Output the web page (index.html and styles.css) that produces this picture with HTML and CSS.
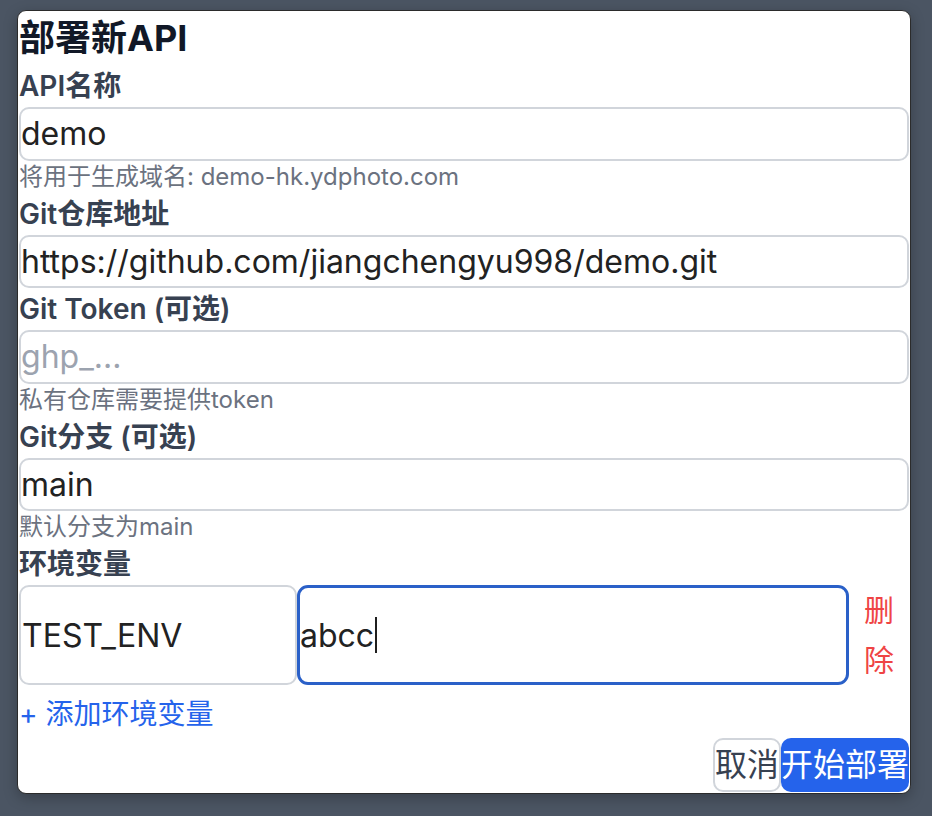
FILE: index.html
```html
<!DOCTYPE html>
<html lang="zh-CN">
<head>
<meta charset="utf-8">
<title>部署新API</title>
<link rel="stylesheet" href="styles.css">
</head>
<body>
<div class="page">
  <div class="dialog">
    <h2 class="title">部署新API</h2>

    <label class="label">API名称</label>
    <input class="field" type="text" value="demo">
    <p class="hint">将用于生成域名: demo-hk.ydphoto.com</p>

    <label class="label">Git仓库地址</label>
    <input class="field" type="text" value="https://github.com/jiangchengyu998/demo.git">

    <label class="label">Git Token (可选)</label>
    <input class="field" type="text" placeholder="ghp_...">
    <p class="hint">私有仓库需要提供token</p>

    <label class="label">Git分支 (可选)</label>
    <input class="field" type="text" value="main">
    <p class="hint">默认分支为main</p>

    <label class="label">环境变量</label>
    <div class="env-row">
      <input class="field env-key" type="text" value="TEST_ENV">
      <div class="field env-value focused">abcc<span class="caret"></span></div>
      <button class="env-delete" type="button">删除</button>
    </div>
    <button class="add-env" type="button">+ 添加环境变量</button>

    <div class="actions">
      <button class="btn btn-cancel" type="button">取消</button>
      <button class="btn btn-primary" type="button">开始部署</button>
    </div>
  </div>
</div>
</body>
</html>
```

FILE: styles.css
```css
* {
  box-sizing: border-box;
}

html, body {
  margin: 0;
  padding: 0;
  height: 100%;
}

body {
  background: #4b5563;
  font-family: Inter, "Noto Sans CJK SC", sans-serif;
}

.page {
  padding: 10px 0 0 17px;
}

.dialog {
  width: 894px;
  background: #ffffff;
  border: 1px solid #2b2b2b;
  border-radius: 9px;
  padding: 0 1px 1px;
  box-shadow: 0 4px 14px rgba(0, 0, 0, 0.25);
  display: flex;
  flex-direction: column;
}

.title {
  margin: 0;
  font-size: 36px;
  line-height: 54px;
  font-weight: 700;
  color: #111827;
}

.label {
  display: block;
  font-size: 28px;
  line-height: 42px;
  font-weight: 600;
  color: #374151;
}

.hint {
  margin: 0;
  font-size: 24px;
  line-height: 32px;
  color: #6b7280;
}

.field {
  display: block;
  width: 100%;
  height: 53.5px;
  margin: 0;
  padding: 0;
  border: 2px solid #d1d5db;
  border-radius: 10px;
  background: #ffffff;
  font-family: Inter, "Noto Sans CJK SC", sans-serif;
  font-size: 32px;
  color: #222222;
  outline: none;
}

.field::placeholder {
  color: #9ca3af;
}

.env-row {
  display: flex;
  height: 100px;
}

.env-row .field {
  height: auto;
}

.env-key {
  flex: 1 1 0;
  min-width: 0;
  padding-left: 1px;
}

.env-value {
  flex: 2 1 0;
  min-width: 0;
  display: flex;
  align-items: center;
  border: 3px solid #2a60c8;
  border-radius: 11px;
  padding: 0;
}

.caret {
  display: inline-block;
  width: 2px;
  height: 36px;
  margin-left: 1px;
  background: #1f1f1f;
}

.env-delete {
  flex: 0 0 60px;
  padding: 0 15px;
  border: none;
  background: transparent;
  font-family: Inter, "Noto Sans CJK SC", sans-serif;
  font-size: 30px;
  line-height: 50px;
  color: #ef4444;
  text-align: center;
}

.add-env {
  align-self: flex-start;
  margin-top: 8px;
  padding: 0;
  border: none;
  background: transparent;
  font-family: Inter, "Noto Sans CJK SC", sans-serif;
  font-size: 28px;
  line-height: 42px;
  color: #2563eb;
}

.actions {
  display: flex;
  justify-content: flex-end;
  margin-top: 3px;
}

.btn {
  height: 54px;
  padding: 0;
  border-radius: 10px;
  font-family: Inter, "Noto Sans CJK SC", sans-serif;
  font-size: 32px;
  line-height: 1;
}

.btn-cancel {
  background: #ffffff;
  border: 2px solid #d1d5db;
  color: #374151;
}

.btn-primary {
  background: #2563eb;
  border: none;
  color: #ffffff;
}
```
